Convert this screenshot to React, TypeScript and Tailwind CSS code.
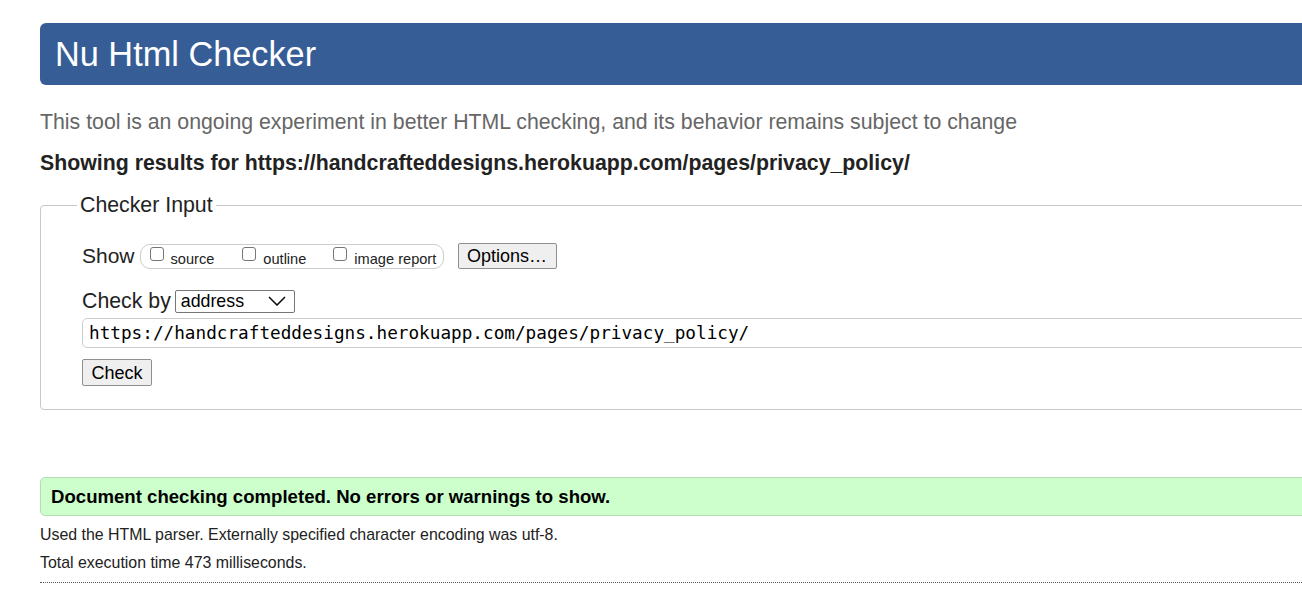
import React from "react";

function Box({ label }: { label: string }) {
  return (
    <span className="inline-flex items-center">
      <span className="inline-block w-[14px] h-[14px] rounded-[3px] border border-[#767676] bg-white mt-[-4px]" />
      <span className="ml-[7px] mt-[5px] text-[14.6px] leading-[18px] text-[#222]">{label}</span>
    </span>
  );
}

export default function App() {
  return (
    <div className="w-full h-[606px] overflow-hidden bg-white font-['Liberation_Sans',Arial,sans-serif] text-[#222]">
      <div className="ml-[40px] w-[1400px] pt-[23px]">
        <div className="h-[62px] bg-[#365d95] rounded-l-[6px] flex items-center pl-[15px]">
          <h1 className="text-white text-[34.3px] leading-none">Nu Html Checker</h1>
        </div>
        <p className="mt-[24px] text-[21.3px] leading-[26px] text-[#666]">
          This tool is an ongoing experiment in better HTML checking, and its behavior remains subject to change
        </p>
        <p className="mt-[15px] text-[21.3px] leading-[26px] font-bold text-[#222]">
          Showing results for https://handcrafteddesigns.herokuapp.com/pages/privacy_policy/
        </p>
        <div className="relative mt-[29px] h-[205px] border border-[#c8c8c8] rounded-[4px]">
          <span className="absolute left-[36px] top-[-14px] bg-white px-[3px] text-[21.3px] leading-[26px]">
            Checker Input
          </span>
          <div className="pl-[41px] pt-[37px]">
            <div className="flex items-center h-[26px]">
              <span className="text-[21px] leading-[26px]">Show</span>
              <div className="ml-[5px] h-[25px] w-[304px] border border-[#ccc] rounded-[10px] flex items-center pl-[9px]">
                <Box label="source" />
                <span className="w-[28px]" />
                <Box label="outline" />
                <span className="w-[27px]" />
                <Box label="image report" />
              </div>
              <button className="ml-[14px] h-[26px] w-[99px] bg-[#efefef] border border-[#8f8f8f] rounded-[2px] text-[18px] leading-none text-black">
                Options…
              </button>
            </div>
            <div className="flex items-center mt-[20px] h-[24px]">
              <span className="text-[21.3px] leading-[26px]">Check by</span>
              <div className="ml-[4px] h-[23px] w-[120px] border border-[#767676] rounded-[2px] flex items-center justify-between pl-[5px] pr-[8px] text-[17.8px] text-black">
                <span>address</span>
                <svg width="18" height="10" viewBox="0 0 18 10">
                  <path d="M1 1 L9 9 L17 1" fill="none" stroke="#111" strokeWidth="1.6" />
                </svg>
              </div>
            </div>
            <div className="mt-[5px] h-[30px] border border-[#ccc] rounded-l-[5px] flex items-center pl-[6px] font-['DejaVu_Sans_Mono',monospace] text-[17.7px] text-black">
              https://handcrafteddesigns.herokuapp.com/pages/privacy_policy/
            </div>
            <button className="mt-[11px] h-[27px] w-[70px] bg-[#efefef] border border-[#8f8f8f] rounded-[2px] text-[18px] leading-none text-black">
              Check
            </button>
          </div>
        </div>
        <div className="mt-[67px] h-[39px] bg-[#ccffcc] border border-[#b5ddb5] rounded-l-[5px] flex items-center pl-[10px] text-[18.6px] font-bold text-black">
          Document checking completed. No errors or warnings to show.
        </div>
        <p className="mt-[9px] text-[15.9px] leading-[20px] text-[#222]">
          Used the HTML parser. Externally specified character encoding was utf-8.
        </p>
        <p className="mt-[8px] text-[15.9px] leading-[20px] text-[#222]">Total execution time 473 milliseconds.</p>
        <div className="mt-[9px] border-t border-dotted border-[#555]" />
      </div>
    </div>
  );
}
